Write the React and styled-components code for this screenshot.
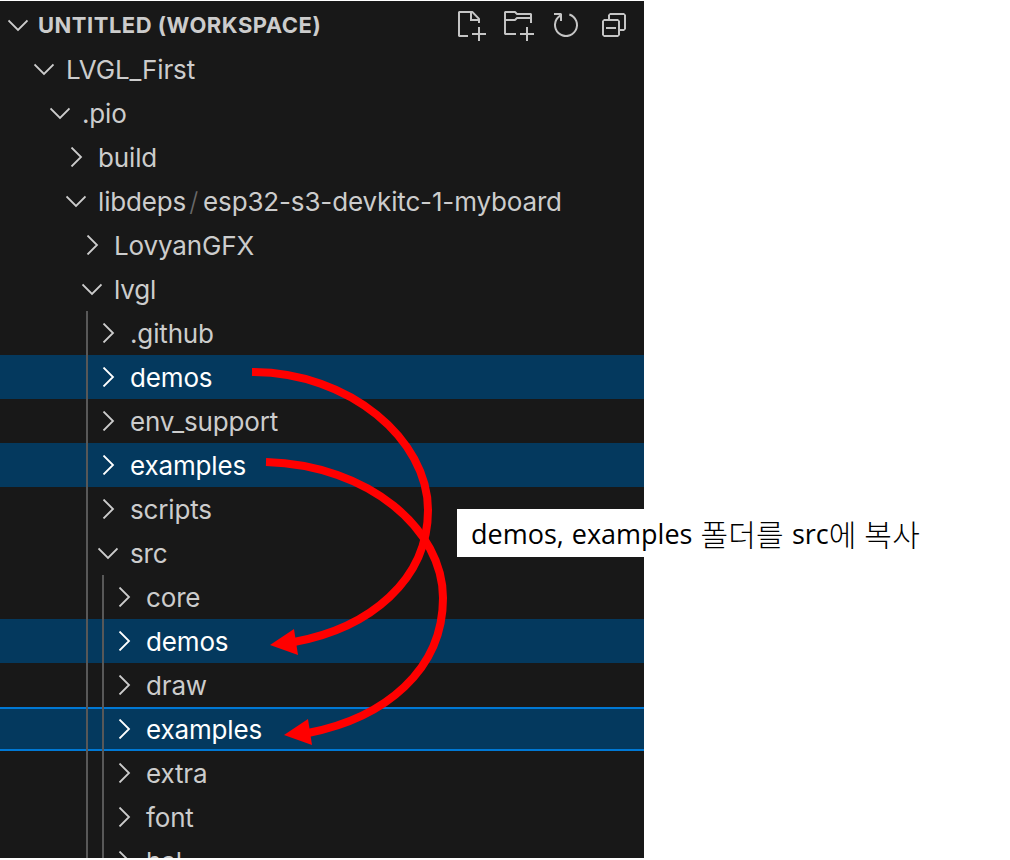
import styled, { createGlobalStyle } from "styled-components";

const GlobalStyle = createGlobalStyle`
  html, body {
    margin: 0;
    background: #fff;
  }
`;

const Page = styled.div`
  position: relative;
  width: 1010px;
  height: 860px;
  padding-top: 1px;
  box-sizing: border-box;
  overflow: hidden;
`;

const Panel = styled.div`
  width: 644px;
  height: 857px;
  padding-top: 2px;
  box-sizing: border-box;
  overflow: hidden;
  background: #181818;
  font-family: Inter, "Liberation Sans", sans-serif;
  font-size: 26px;
  letter-spacing: -0.15px;
  color: #cccccc;
`;

const Header = styled.div`
  display: flex;
  align-items: center;
  height: 44px;
  padding: 0 14px 0 8px;
`;

const HeaderTitle = styled.span`
  flex: 1;
  margin-left: -2px;
  font-size: 22px;
  font-weight: 700;
  letter-spacing: 0.5px;
`;

const Toolbar = styled.div`
  display: flex;
  align-items: center;
  gap: 16px;
  color: #c5c5c5;
`;

const Group = styled.div`
  position: relative;
  &::before {
    content: "";
    position: absolute;
    z-index: 1;
    top: 0;
    bottom: 0;
    left: ${(p) => p.$guide}px;
    width: 2px;
    background: #585858;
  }
`;

const Row = styled.div`
  display: flex;
  align-items: center;
  height: 44px;
  box-sizing: border-box;
  padding-left: ${(p) => p.$text - 32}px;
  white-space: nowrap;
  background: ${(p) => (p.$selected ? "#04395e" : "transparent")};
  color: ${(p) => (p.$selected ? "#ffffff" : "#cccccc")};
  border-top: ${(p) => (p.$focused ? "2px solid #0078d4" : "none")};
  border-bottom: ${(p) => (p.$focused ? "2px solid #0078d4" : "none")};
`;

const Twisty = styled.svg`
  flex: none;
  width: 20px;
  height: 20px;
  margin-right: 12px;
  fill: none;
  stroke: currentColor;
  stroke-width: 1.8;
`;

const Slash = styled.span`
  margin: 0 5px 0 3px;
  color: #6a6a6a;
  font-weight: 300;
`;

const ToolIcon = styled.svg`
  display: block;
  width: 32px;
  height: 32px;
  fill: currentColor;
`;

const Arrows = styled.svg`
  position: absolute;
  z-index: 2;
  top: 0;
  left: 0;
  pointer-events: none;
`;

const Note = styled.div`
  position: absolute;
  z-index: 3;
  top: 509px;
  left: 457px;
  height: 48px;
  padding: 0 14px;
  display: flex;
  align-items: center;
  background: #fff;
  color: #000;
  font-family: "Open Sans", "Noto Sans CJK KR", sans-serif;
  font-size: 27px;
  word-spacing: 1px;
  white-space: pre;
`;

const Hangul = styled.span`
  font-family: "Noto Sans CJK KR", sans-serif;
  font-size: 30px;
  font-weight: 300;
  letter-spacing: 0.2px;
`;

const Chevron = ({ open }) => (
  <Twisty viewBox="0 0 20 20">
    {open ? <path d="M0.5 5.5 L10 15 L19.5 5.5" /> : <path d="M5.5 0.5 L15 10 L5.5 19.5" />}
  </Twisty>
);

const NewFileIcon = () => (
  <ToolIcon viewBox="0 0 16 16">
    <path d="M9.5 1.1l3.4 3.5.1.4v2h-1V6H8V2H3v11h4v1H2.5l-.5-.5v-12l.5-.5h6.7l.3.1zM9 2v3h2.9L9 2zm4 14h-1v-3H9v-1h3V9h1v3h3v1h-3v3z" />
  </ToolIcon>
);

const NewFolderIcon = () => (
  <ToolIcon viewBox="0 0 16 16">
    <path d="M14.5 2H7.71l-.85-.85L6.51 1h-5l-.5.5v11l.5.5H7v-1H1.99V6h4.49l.35-.15.86-.86H14v1.5l-.001.51h1.011V2.5L14.5 2zm-.51 2h-6.5l-.35.15-.86.86H2v-3h4.29l.85.85.36.15H14l-.01.99zM13 16h-1v-3H9v-1h3V9h1v3h3v1h-3v3z" />
  </ToolIcon>
);

const RefreshIcon = () => (
  <ToolIcon viewBox="0 0 16 16">
    <path d="M4.681 3H2V2h3.5l.5.5V6H5V4a5 5 0 1 0 4.53-.761l.302-.954A6 6 0 1 1 4.681 3z" />
  </ToolIcon>
);

const CollapseIcon = () => (
  <ToolIcon viewBox="0 0 16 16">
    <path d="M9 9H4v1h5V9z" />
    <path fillRule="evenodd" clipRule="evenodd" d="M5 3l1-1h7l1 1v7l-1 1h-2v2l-1 1H3l-1-1V6l1-1h2V3zm1 2h4l1 1v4h2V3H6v2zm4 1H3v7h7V6z" />
  </ToolIcon>
);

const lvglChildren = [
  { name: ".github" },
  { name: "demos", selected: true },
  { name: "env_support" },
  { name: "examples", selected: true },
  { name: "scripts" },
];

const srcChildren = [
  { name: "core" },
  { name: "demos", selected: true },
  { name: "draw" },
  { name: "examples", selected: true, focused: true },
  { name: "extra" },
  { name: "font" },
  { name: "hal" },
];

const Folder = ({ text, open, selected, focused, children }) => (
  <Row $text={text} $selected={selected} $focused={focused}>
    <Chevron open={open} />
    {children}
  </Row>
);

const App = () => (
  <Page>
    <GlobalStyle />
    <Panel>
      <Header>
        <Chevron open />
        <HeaderTitle>UNTITLED (WORKSPACE)</HeaderTitle>
        <Toolbar>
          <NewFileIcon />
          <NewFolderIcon />
          <RefreshIcon />
          <CollapseIcon />
        </Toolbar>
      </Header>
      <Folder text={66} open>LVGL_First</Folder>
      <Folder text={82} open>.pio</Folder>
      <Folder text={98}>build</Folder>
      <Folder text={98} open>
        libdeps<Slash>/</Slash>esp32-s3-devkitc-1-myboard
      </Folder>
      <Folder text={114}>LovyanGFX</Folder>
      <Folder text={114} open>lvgl</Folder>
      <Group $guide={86}>
        {lvglChildren.map((item) => (
          <Folder key={item.name} text={130} selected={item.selected}>{item.name}</Folder>
        ))}
        <Folder text={130} open>src</Folder>
        <Group $guide={102}>
          {srcChildren.map((item) => (
            <Folder key={item.name} text={146} selected={item.selected} focused={item.focused}>
              {item.name}
            </Folder>
          ))}
        </Group>
      </Group>
    </Panel>
    <Arrows width="1010" height="860" viewBox="0 0 1010 860">
      <g fill="none" stroke="#ff0000" strokeWidth="8">
        <path d="M252 372 C350 372 428 440 428 510 C428 580 370 628 294 642" />
        <path d="M266 462 C370 465 443 530 443 598 C443 670 385 718 308 733" />
      </g>
      <path d="M270 645 L294 629 L298 655 Z" fill="#ff0000" />
      <path d="M284 735 L308 719 L312 745 Z" fill="#ff0000" />
    </Arrows>
    <Note>
      {"demos, examples "}
      <Hangul>폴더를</Hangul>
      {" src"}
      <Hangul>에 복사</Hangul>
    </Note>
  </Page>
);

export default App;
